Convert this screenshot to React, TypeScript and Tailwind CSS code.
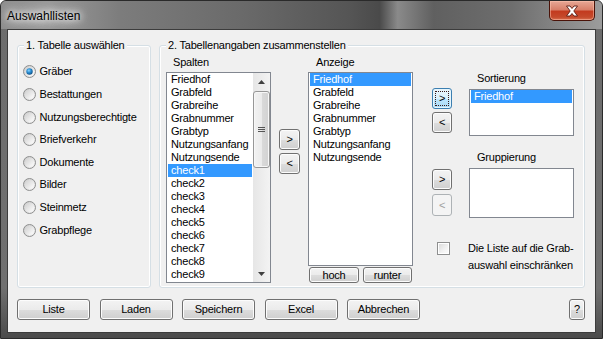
import React from "react";

const btnBase =
  "flex items-center justify-center rounded-[3px] border text-[11px] leading-[13px] shrink-0";
const btnNormal =
  "border-[#707070] text-black bg-[linear-gradient(180deg,#f3f3f3_0%,#ebebeb_50%,#dddddd_51%,#cfcfcf_100%)] shadow-[inset_0_0_0_1px_#fcfcfc]";
const btnFocused =
  "border-[#3c7fb1] text-black bg-[linear-gradient(180deg,#eaf6fd_0%,#d9f0fc_50%,#bee6fd_51%,#a7d9f5_100%)] shadow-[inset_0_0_0_1px_#e8f6fd]";
const btnDisabled = "border-[#adb2b5] text-[#a0a0a0] bg-[#f4f4f4]";

function Btn({
  children,
  className = "",
  variant = "normal",
}: {
  children: React.ReactNode;
  className?: string;
  variant?: "normal" | "focused" | "disabled";
}) {
  const v = variant === "focused" ? btnFocused : variant === "disabled" ? btnDisabled : btnNormal;
  return (
    <div className={`${btnBase} ${v} ${className}`}>
      {variant === "focused" ? (
        <div className="flex items-center justify-center w-[calc(100%-4px)] h-[calc(100%-4px)] border border-dotted border-[#3a1a1a]">
          {children}
        </div>
      ) : (
        children
      )}
    </div>
  );
}

function Radio({ checked }: { checked?: boolean }) {
  return (
    <svg width="13" height="13" viewBox="0 0 13 13" className="shrink-0">
      <defs>
        <linearGradient id="rgOuter" x1="0" y1="0" x2="1" y2="1">
          <stop offset="0" stopColor="#c9c9c9" />
          <stop offset="1" stopColor="#f6f6f6" />
        </linearGradient>
        <linearGradient id="rgInner" x1="0" y1="0" x2="1" y2="1">
          <stop offset="0" stopColor="#cfcfcf" />
          <stop offset="1" stopColor="#ffffff" />
        </linearGradient>
        <radialGradient id="rgDot" cx="0.4" cy="0.35" r="0.7">
          <stop offset="0" stopColor="#8ad4ff" />
          <stop offset="0.45" stopColor="#2a8fd4" />
          <stop offset="1" stopColor="#0b4a80" />
        </radialGradient>
      </defs>
      <circle cx="6.5" cy="6.5" r="6" fill="url(#rgOuter)" stroke="#8e8f8f" strokeWidth="1" />
      <circle cx="6.5" cy="6.5" r="4.6" fill="url(#rgInner)" />
      {checked && <circle cx="6.5" cy="6.5" r="3.2" fill="url(#rgDot)" />}
    </svg>
  );
}

function Checkbox() {
  return (
    <div className="w-[13px] h-[13px] border border-[#8e8f8f] bg-white p-[1px]">
      <div className="w-full h-full bg-[linear-gradient(135deg,#dcdcdc_0%,#f2f2f2_60%,#fbfbfb_100%)]" />
    </div>
  );
}

function Item({ text, selected }: { text: string; selected?: boolean }) {
  return (
    <div
      className={`h-[13px] leading-[13px] mx-[1px] pl-[3px] whitespace-nowrap ${
        selected ? "bg-[#3399ff] text-white" : "text-black"
      }`}
    >
      {text}
    </div>
  );
}

function Group({
  title,
  className = "",
  children,
}: {
  title: string;
  className?: string;
  children: React.ReactNode;
}) {
  return (
    <div
      className={`relative h-[243px] rounded-[3px] border border-[#d5dfe5] shadow-[inset_0_0_0_1px_#ffffff] ${className}`}
    >
      <span className="absolute left-[6px] top-[-7px] px-[2px] bg-[#f0f0f0] leading-[13px] whitespace-nowrap">
        {title}
      </span>
      {children}
    </div>
  );
}

const spalten = [
  "Friedhof",
  "Grabfeld",
  "Grabreihe",
  "Grabnummer",
  "Grabtyp",
  "Nutzungsanfang",
  "Nutzungsende",
  "check1",
  "check2",
  "check3",
  "check4",
  "check5",
  "check6",
  "check7",
  "check8",
  "check9",
];

const anzeige = [
  "Friedhof",
  "Grabfeld",
  "Grabreihe",
  "Grabnummer",
  "Grabtyp",
  "Nutzungsanfang",
  "Nutzungsende",
];

const radios = [
  "Gräber",
  "Bestattungen",
  "Nutzungsberechtigte",
  "Briefverkehr",
  "Dokumente",
  "Bilder",
  "Steinmetz",
  "Grabpflege",
];

function Scrollbar() {
  return (
    <div className="w-[17px] flex flex-col bg-[linear-gradient(90deg,#e6e6e6_0%,#f3f3f3_100%)]">
      <div className="h-[17px] flex items-center justify-center">
        <svg width="7" height="4" viewBox="0 0 7 4">
          <polygon points="0,4 7,4 3.5,0" fill="#404040" />
        </svg>
      </div>
      <div className="mt-[1px] h-[77px] mx-[0px] rounded-[3px] border border-[#979797] shadow-[inset_0_0_0_1px_#f7f7f7] bg-[linear-gradient(90deg,#f2f2f2_0%,#ebebeb_50%,#dadada_51%,#d2d2d2_100%)] flex flex-col items-center justify-center gap-[1px]">
        <div className="w-[7px] h-[1px] bg-[#555]" />
        <div className="w-[7px] h-[1px] bg-[#555]" />
        <div className="w-[7px] h-[1px] bg-[#555]" />
      </div>
      <div className="flex-1" />
      <div className="h-[17px] flex items-center justify-center">
        <svg width="7" height="4" viewBox="0 0 7 4">
          <polygon points="0,0 7,0 3.5,4" fill="#404040" />
        </svg>
      </div>
    </div>
  );
}

export default function App() {
  return (
    <div className="w-[603px] h-[339px] overflow-hidden bg-white font-['Liberation_Sans',Arial,sans-serif] text-[11px] tracking-[-0.2px] text-black">
      <div className="w-[603px] h-[339px] flex flex-col rounded-t-[6px] border border-[#2a2a2a] bg-[linear-gradient(180deg,#6c6c6c_0%,#707070_85%,#4a4a4a_100%)]">
        {/* Title bar */}
        <div className="h-[28px] shrink-0 flex items-start justify-between rounded-t-[5px] bg-[linear-gradient(90deg,#8e8e8e_0%,#9a9a9a_8%,#7c7c7c_20%,#6a6a6a_40%,#555555_58%,#4a4a4a_63%,#8a8a8a_66%,#606060_72%,#6e6e6e_85%,#9c9c9c_100%)]">
          <span className="pl-[6px] pt-[8px] text-[12px] leading-[14px] tracking-normal text-black [text-shadow:0_0_6px_#ffffff,0_0_10px_#ffffff,0_0_14px_#ffffff]">
            Auswahllisten
          </span>
          <div className="mr-[7px] w-[46px] h-[20px] rounded-b-[5px] border border-t-0 border-[#4a1208] bg-[linear-gradient(180deg,#e7a896_0%,#d8806a_45%,#c33b1f_55%,#c54a2c_85%,#d97050_100%)] shadow-[inset_0_0_0_1px_rgba(255,200,180,0.5)] flex items-center justify-center">
            <svg width="14" height="12" viewBox="0 0 14 12">
              <path
                d="M1.5 1 L5 1 L7 3.5 L9 1 L12.5 1 L8.8 6 L12.5 11 L9 11 L7 8.5 L5 11 L1.5 11 L5.2 6 Z"
                fill="#ffffff"
                stroke="#5a1a10"
                strokeWidth="0.9"
                strokeLinejoin="round"
              />
            </svg>
          </div>
        </div>

        {/* Client area */}
        <div className="mx-[6px] mb-[5px] flex-1 border border-[#3c3c3c] bg-[#f0f0f0] flex flex-col">
          <div className="flex mt-[15px] ml-[9px] gap-[8px]">
            {/* Group 1 */}
            <Group title="1. Tabelle auswählen" className="w-[134px]">
              <div className="flex flex-col pt-[14.7px] pl-[5px]">
                {radios.map((r, i) => (
                  <div key={r} className="h-[22.6px] flex items-center gap-[3.5px]">
                    <Radio checked={i === 0} />
                    <span className="leading-[13px] whitespace-nowrap">{r}</span>
                  </div>
                ))}
              </div>
            </Group>

            {/* Group 2 */}
            <Group title="2. Tabellenangaben zusammenstellen" className="w-[426px]">
              <div className="flex pl-[6px]">
                {/* Spalten */}
                <div className="w-[105px] flex flex-col">
                  <div className="h-[26px] pl-[7px] pt-[10px] leading-[13px]">Spalten</div>
                  <div className="h-[211px] border border-[#828790] bg-white flex">
                    <div className="flex-1 flex flex-col">
                      {spalten.map((s) => (
                        <Item key={s} text={s} selected={s === "check1"} />
                      ))}
                    </div>
                    <Scrollbar />
                  </div>
                </div>

                {/* Middle buttons */}
                <div className="ml-[8px] w-[21px] flex flex-col gap-[3px] pt-[83px]">
                  <Btn className="w-[21px] h-[21px]">&gt;</Btn>
                  <Btn className="w-[21px] h-[21px]">&lt;</Btn>
                </div>

                {/* Anzeige */}
                <div className="ml-[8px] w-[105px] flex flex-col">
                  <div className="h-[26px] pl-[8px] pt-[10px] leading-[13px]">Anzeige</div>
                  <div className="h-[194px] border border-[#828790] bg-white flex flex-col">
                    {anzeige.map((s, i) => (
                      <Item key={s} text={s} selected={i === 0} />
                    ))}
                  </div>
                  <div className="flex mt-[1px] pl-[1px] gap-[4px]">
                    <Btn className="w-[50px] h-[16px]">hoch</Btn>
                    <Btn className="w-[49px] h-[16px]">runter</Btn>
                  </div>
                </div>

                {/* Right section */}
                <div className="ml-[19px] w-[142px] flex flex-col">
                  <div className="h-[13px] mt-[26px] pl-[45px] leading-[13px]">Sortierung</div>
                  <div className="flex mt-[3px]">
                    <div className="w-[20px] flex flex-col gap-[3px]">
                      <Btn variant="focused" className="w-[20px] h-[21px]">&gt;</Btn>
                      <Btn className="w-[20px] h-[21px]">&lt;</Btn>
                    </div>
                    <div className="ml-[17px] mt-[1px] w-[105px] h-[47px] border border-[#828790] bg-white flex flex-col">
                      <Item text="Friedhof" selected />
                    </div>
                  </div>
                  <div className="h-[13px] mt-[15px] pl-[45px] leading-[13px]">Gruppierung</div>
                  <div className="flex mt-[4px]">
                    <div className="w-[20px] mt-[1px] flex flex-col gap-[4px]">
                      <Btn className="w-[20px] h-[21px]">&gt;</Btn>
                      <Btn variant="disabled" className="w-[20px] h-[22px]">&lt;</Btn>
                    </div>
                    <div className="ml-[17px] w-[105px] h-[50px] border border-[#828790] bg-white" />
                  </div>
                  <div className="flex mt-[21.5px]">
                    <div className="w-[20px] pl-[5px] pt-[2.5px]">
                      <Checkbox />
                    </div>
                    <div className="ml-[16px] leading-[17px] whitespace-nowrap">
                      <div>Die Liste auf die Grab-</div>
                      <div>auswahl einschränken</div>
                    </div>
                  </div>
                </div>
              </div>
            </Group>
          </div>

          {/* Bottom buttons */}
          <div className="flex mt-[11px] ml-[9px] mr-[10px] gap-[9.5px]">
            <Btn className="w-[73px] h-[21px]">Liste</Btn>
            <Btn className="w-[73px] h-[21px]">Laden</Btn>
            <Btn className="w-[73px] h-[21px]">Speichern</Btn>
            <Btn className="w-[73px] h-[21px]">Excel</Btn>
            <Btn className="w-[73px] h-[21px]">Abbrechen</Btn>
            <Btn className="ml-auto w-[16px] h-[21px]">?</Btn>
          </div>
        </div>
      </div>
    </div>
  );
}
